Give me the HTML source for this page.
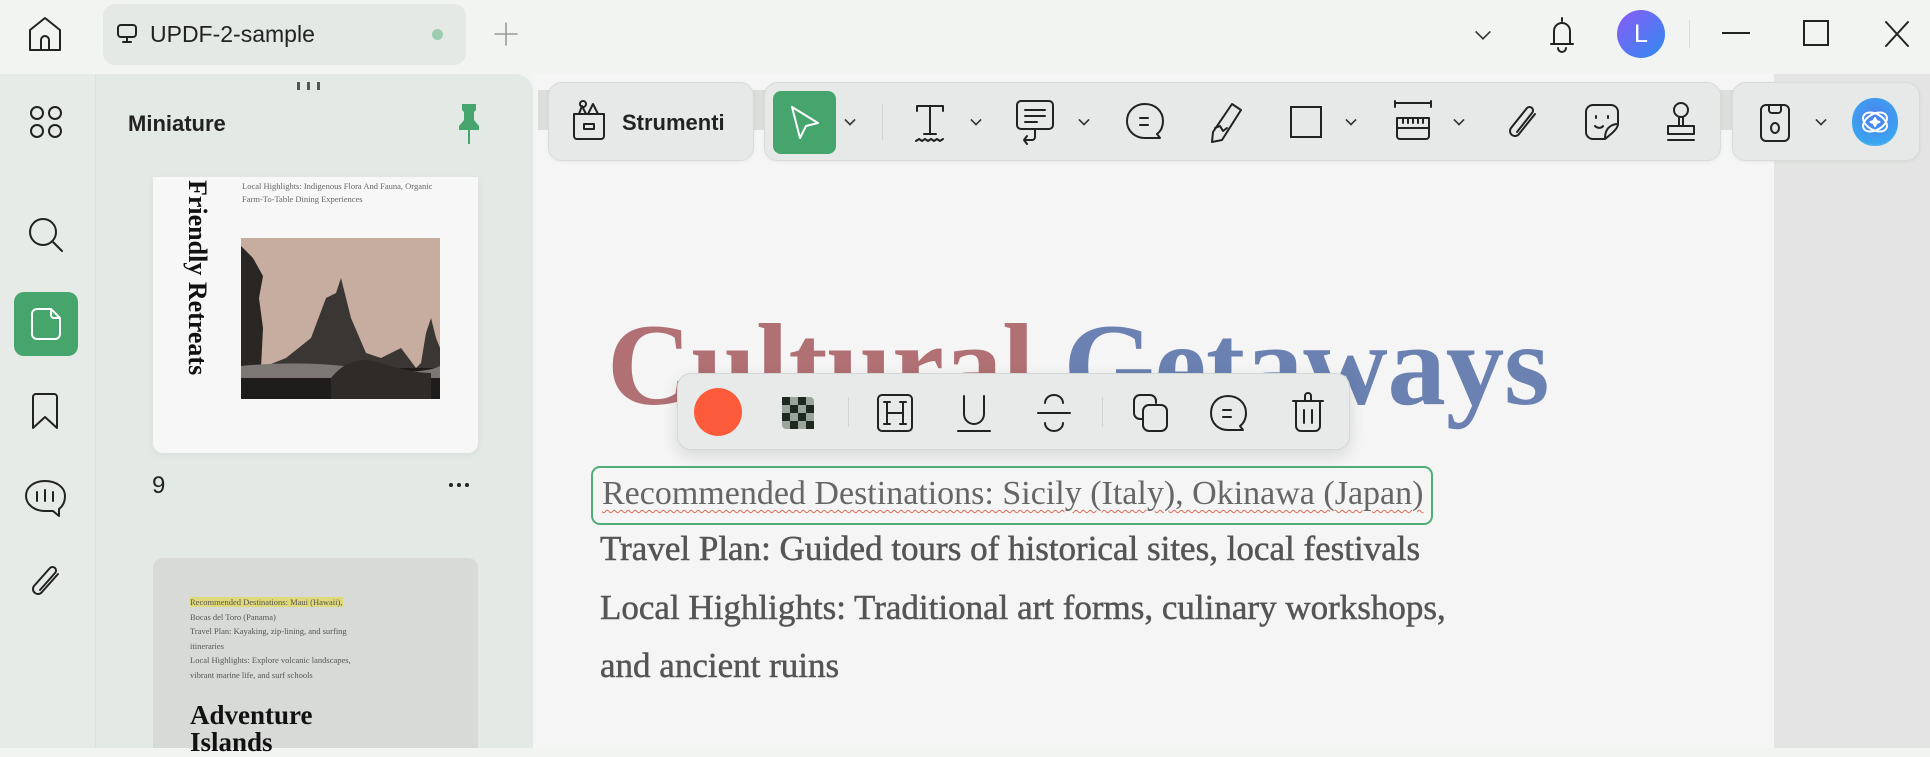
<!DOCTYPE html>
<html><head><meta charset="utf-8"><style>
*{margin:0;padding:0;box-sizing:border-box}
body{width:1930px;height:748px;overflow:hidden;background:#f2f4f2;font-family:"Liberation Sans",sans-serif;position:relative;color:#222}
.a{position:absolute}
svg.i{position:absolute;fill:none;stroke:#222;stroke-width:2;stroke-linecap:round;stroke-linejoin:round}
.tb{position:absolute;top:82px;height:79px;background:#e6e9e7;border:1px solid #d8dcd9;border-radius:14px;box-shadow:0 1px 3px rgba(0,0,0,.06)}
.chev{position:absolute;width:10px;height:10px;border-right:2px solid #333;border-bottom:2px solid #333;transform:rotate(45deg) scale(.8)}
.serif{font-family:"Liberation Serif",serif}
</style></head><body>

<!-- top bar -->
<svg class="i" style="left:26px;top:14px" width="38" height="40" viewBox="0 0 38 40"><path d="M4 36V16L19 4L34 16V36H4Z M15 36V26a4 4 0 0 1 8 0V36"/></svg>
<div class="a" style="left:103px;top:4px;width:363px;height:61px;background:#e5e9e6;border-radius:12px"></div>
<svg class="i" style="left:116px;top:23px" width="22" height="22" viewBox="0 0 22 22" stroke-width="1.6"><rect x="2" y="2" width="18" height="12" rx="3"/><path d="M11 14v5M7 19h8"/></svg>
<div class="a" style="left:150px;top:21px;font-size:23px;color:#222">UPDF-2-sample</div>
<div class="a" style="left:432px;top:29px;width:11px;height:11px;border-radius:50%;background:#9ccdb0"></div>
<svg class="i" style="left:494px;top:22px;stroke:#999;stroke-width:1.6" width="24" height="24" viewBox="0 0 24 24"><path d="M12 1v22M1 12h22"/></svg>

<div class="chev" style="left:1476px;top:25px;width:14px;height:14px"></div>
<svg class="i" style="left:1546px;top:14px" width="32" height="40" viewBox="0 0 32 40" stroke-width="1.8"><path d="M16 4v3M8 30V17a8 8 0 0 1 16 0V30H8ZM5 30h22M12 34a4 4 0 0 0 8 0"/></svg>
<div class="a" style="left:1617px;top:10px;width:48px;height:48px;border-radius:50%;background:linear-gradient(135deg,#8a5cf6,#2f8af0);color:#fff;font-size:25px;text-align:center;line-height:48px">L</div>
<div class="a" style="left:1689px;top:20px;width:1px;height:28px;background:#ddd"></div>
<div class="a" style="left:1722px;top:32px;width:28px;height:2px;background:#222"></div>
<div class="a" style="left:1803px;top:20px;width:26px;height:26px;border:2px solid #222"></div>
<svg class="i" style="left:1884px;top:20px" width="26" height="28" viewBox="0 0 26 28" stroke-width="1.8"><path d="M2 2L24 26M24 2L2 26"/></svg>

<!-- left panel -->
<div class="a" style="left:0;top:74px;width:533px;height:674px;background:#e3e9e5;border-top-right-radius:18px"></div>
<div class="a" style="left:0;top:74px;width:96px;height:674px;background:#e6ebe8;border-right:1px solid #dbe1dd"></div>
<svg class="i" style="left:28px;top:104px" width="36" height="36" viewBox="0 0 36 36" stroke-width="1.8"><circle cx="9" cy="9" r="6"/><circle cx="27" cy="9" r="6"/><circle cx="9" cy="27" r="6"/><circle cx="27" cy="27" r="6"/></svg>
<svg class="i" style="left:25px;top:214px" width="42" height="42" viewBox="0 0 42 42"><circle cx="18" cy="18" r="13"/><path d="M28 28l9 9"/></svg>
<div class="a" style="left:14px;top:292px;width:64px;height:64px;background:#46a56d;border-radius:10px"></div>
<svg class="i" style="left:29px;top:306px;stroke:#fff" width="34" height="36" viewBox="0 0 34 36"><path d="M8 3h14l9 9v16a5 5 0 0 1-5 5H8a5 5 0 0 1-5-5V8a5 5 0 0 1 5-5Z M22 3v6a3 3 0 0 0 3 3h6"/></svg>
<svg class="i" style="left:30px;top:391px" width="30" height="40" viewBox="0 0 30 40"><path d="M3 37V6a3 3 0 0 1 3-3h18a3 3 0 0 1 3 3v31L15 26Z"/></svg>
<svg class="i" style="left:24px;top:478px" width="42" height="40" viewBox="0 0 42 40"><path d="M21 3C10 3 2 9 2 18c0 8 8 15 19 15h8l6 5v-7c4-3 6-8 6-13C41 9 32 3 21 3Z M13 14v9M21 12v11M29 14v9"/></svg>
<svg class="i" style="left:28px;top:562px" width="36" height="40" viewBox="0 0 36 40"><path d="M30 12L14 30a5 5 0 0 1-8-6L22 6a3.5 3.5 0 0 1 5 5L12 28"/></svg>

<div class="a" style="left:297px;top:82px;width:3px;height:8px;background:#555;box-shadow:10px 0 #555,20px 0 #555"></div>
<div class="a" style="left:128px;top:111px;font-size:22px;font-weight:bold;color:#222">Miniature</div>
<svg class="a" style="left:456px;top:104px" width="26" height="40" viewBox="0 0 26 40"><path d="M6 0h14v6l-2 2v8l5 6v4H3v-4l5-6V8L6 6Z" fill="#46a56d"/><rect x="12" y="26" width="2" height="14" fill="#46a56d"/></svg>

<!-- thumb 1 -->
<div class="a" style="left:153px;top:177px;width:325px;height:276px;background:#f7f7f7;border-radius:0 0 10px 10px;box-shadow:0 2px 8px rgba(0,0,0,.05)"></div>
<div class="a serif" style="left:172px;top:180px;width:40px;height:220px;font-weight:bold;font-size:26px;color:#111;writing-mode:vertical-rl;white-space:nowrap">Friendly Retreats</div>
<div class="a serif" style="left:242px;top:180px;font-size:8.5px;color:#666;line-height:13px">Local Highlights: Indigenous Flora And Fauna, Organic<br>Farm-To-Table Dining Experiences</div>
<svg class="a" style="left:241px;top:238px" width="199" height="161" viewBox="0 0 199 161"><rect width="199" height="161" fill="#c7ada0"/><path d="M0 8 L12 20 L22 38 L18 60 L22 90 L20 130 L28 161 H0Z" fill="#2a2624"/><path d="M20 130 L45 120 L70 100 L85 60 L95 55 L100 40 L110 80 L125 115 L140 120 L160 110 L175 130 L180 125 L185 95 L190 80 L195 100 L199 110 V161 H0 Z" fill="#3a3634"/><rect y="130" width="199" height="31" fill="#1f1d1c"/><path d="M0 128 Q60 122 120 130 T199 128 V140 H0Z" fill="#7c7775"/><path d="M90 140 Q110 115 140 125 T190 135 V161 H90Z" fill="#2f2b28"/></svg>
<div class="a" style="left:152px;top:472px;font-size:24px;color:#222">9</div>
<div class="a" style="left:449px;top:483px;width:4px;height:4px;border-radius:50%;background:#222;box-shadow:8px 0 #222,16px 0 #222"></div>

<!-- thumb 2 -->
<div class="a" style="left:153px;top:558px;width:325px;height:190px;background:#d8dad8;border-radius:10px 10px 0 0"></div>
<div class="a serif" style="left:190px;top:595px;font-size:8.5px;color:#555;line-height:14.6px"><span style="background:#dfd97a">Recommended Destinations: Maui (Hawaii),</span><br>Bocas del Toro (Panama)<br>Travel Plan: Kayaking, zip-lining, and surfing<br>itineraries<br>Local Highlights: Explore volcanic landscapes,<br>vibrant marine life, and surf schools</div>
<div class="a serif" style="left:190px;top:702px;font-size:27px;font-weight:bold;color:#111;line-height:27px">Adventure<br>Islands</div>

<!-- main -->
<div class="a" style="left:533px;top:74px;width:1241px;height:674px;background:#f4f5f4"></div>
<div class="a" style="left:1774px;top:74px;width:156px;height:674px;background:#e3e4e3"></div>
<div class="a" style="left:538px;top:90px;width:1236px;height:40px;background:#dcdedc"></div>

<div class="tb" style="left:548px;width:206px"></div>
<svg class="i" style="left:570px;top:98px" width="38" height="44" viewBox="0 0 38 44" stroke-width="1.8"><path d="M4 16h30v22a3 3 0 0 1-3 3H7a3 3 0 0 1-3-3Z M14 26h10v5H14Z M9 16l3-8 4 8 M18 16l5-10 5 10"/><circle cx="13" cy="6" r="3"/></svg>
<div class="a" style="left:622px;top:110px;font-size:22px;font-weight:bold">Strumenti</div>

<div class="tb" style="left:764px;width:957px"></div>
<div class="a" style="left:773px;top:91px;width:63px;height:63px;background:#46a56d;border-radius:8px"></div>
<svg class="i" style="left:788px;top:104px;stroke:#fff" width="34" height="38" viewBox="0 0 34 38" stroke-width="1.8"><path d="M4 3L30 19L18 22L12 34Z"/></svg>
<div class="chev" style="left:845px;top:115px"></div>
<div class="a" style="left:882px;top:104px;width:1px;height:36px;background:#d0d4d1"></div>
<svg class="i" style="left:913px;top:103px" width="34" height="40" viewBox="0 0 34 40" stroke-width="1.8"><path d="M4 8V3h26v5M17 3v28M11 31h12M3 38l3-2 3 2 3-2 3 2 3-2 3 2 3-2 3 2 3-2"/></svg>
<div class="chev" style="left:971px;top:115px"></div>
<svg class="i" style="left:1014px;top:98px" width="42" height="50" viewBox="0 0 42 50" stroke-width="1.8"><rect x="3" y="3" width="36" height="28" rx="4"/><path d="M11 12h20M11 18h20M11 24h12M21 31v8a3 3 0 0 1-3 3H10M13 38l-3 4 3 4"/></svg>
<div class="chev" style="left:1079px;top:115px"></div>
<svg class="i" style="left:1124px;top:101px" width="42" height="42" viewBox="0 0 42 42" stroke-width="1.8"><path d="M21 3C11 3 3 10 3 20s8 17 18 17h15l-3-4c4-3 6-8 6-13C39 10 31 3 21 3Z M16 17h8M16 24h8"/></svg>
<svg class="i" style="left:1208px;top:100px" width="36" height="44" viewBox="0 0 36 44" stroke-width="1.8"><path d="M24 4l9 6L14 40l-10 2 1-10Z M7 28l5-2 3 5 4-3"/></svg>
<div class="a" style="left:1290px;top:106px;width:32px;height:32px;border:2px solid #222"></div>
<div class="chev" style="left:1346px;top:115px"></div>
<svg class="i" style="left:1393px;top:100px" width="40" height="42" viewBox="0 0 40 42" stroke-width="1.8"><path d="M2 3h36M2 1v6M38 1v6M4 18h32v18a3 3 0 0 1-3 3H7a3 3 0 0 1-3-3Z M4 28h32M10 18v5M15 18v5M20 18v5M25 18v5M30 18v5"/></svg>
<div class="chev" style="left:1454px;top:115px"></div>
<svg class="i" style="left:1505px;top:102px" width="36" height="40" viewBox="0 0 36 40" stroke-width="1.8"><path d="M30 12L14 32a5 5 0 0 1-8-6L22 6a3.5 3.5 0 0 1 5 5L12 30"/></svg>
<svg class="i" style="left:1583px;top:102px" width="38" height="40" viewBox="0 0 38 40" stroke-width="1.8"><path d="M10 3h18a7 7 0 0 1 7 7v12c-4 0-13 2-13 14v1H10a7 7 0 0 1-7-7V10a7 7 0 0 1 7-7Z M22 37c5-4 13-10 13-15 M13 14v2M25 14v2M12 24c3 3 7 2 8 0"/></svg>
<svg class="i" style="left:1663px;top:100px" width="36" height="44" viewBox="0 0 36 44" stroke-width="1.8"><circle cx="18" cy="10" r="7"/><path d="M16 17v9h4v-9M5 26h26v8H5Z M5 40h26"/></svg>

<div class="tb" style="left:1732px;width:188px"></div>
<svg class="i" style="left:1758px;top:102px" width="34" height="42" viewBox="0 0 34 42" stroke-width="1.8"><rect x="3" y="3" width="28" height="36" rx="5"/><path d="M11 3v5a3 3 0 0 0 3 3h6a3 3 0 0 0 3-3V3"/><ellipse cx="17" cy="26" rx="4" ry="5"/></svg>
<div class="chev" style="left:1816px;top:115px"></div>
<div class="a" style="left:1852px;top:98px;width:46px;height:48px;border-radius:48%;background:radial-gradient(circle at 50% 40%,#4f7ff0,#3aa4f0 70%,#7fd8f4)"></div>
<svg class="i" style="left:1858px;top:106px;stroke:#fff" width="34" height="32" viewBox="0 0 34 32" stroke-width="2"><ellipse cx="17" cy="16" rx="13" ry="8" transform="rotate(-30 17 16)"/><ellipse cx="17" cy="16" rx="13" ry="8" transform="rotate(30 17 16)"/><path d="M17 12l1.5 3 3 1-3 1-1.5 3-1.5-3-3-1 3-1Z" fill="#fff"/></svg>

<!-- page content -->
<div class="a serif" style="left:607px;top:296px;font-size:117px;font-weight:bold;white-space:nowrap;letter-spacing:-0.2px;line-height:140px"><span style="color:#b07074">Cultural</span> <span style="color:#6a81b2">Getaways</span></div>

<div class="a serif" style="left:591px;top:466px;width:842px;height:59px;border:2px solid #4fae75;border-radius:9px"></div>
<div class="a serif" style="left:602px;top:475px;font-size:34px;color:#666;white-space:nowrap;text-decoration:underline wavy #e06a55;text-decoration-thickness:1px;text-underline-offset:5px">Recommended Destinations: Sicily (Italy), Okinawa (Japan)</div>
<div class="a serif" style="left:600px;top:520px;font-size:35px;color:#555;white-space:nowrap;line-height:58.5px;-webkit-text-stroke:0.5px #555">Travel Plan: Guided tours of historical sites, local festivals<br>Local Highlights: Traditional art forms, culinary workshops,<br>and ancient ruins</div>

<!-- floating toolbar -->
<div class="a" style="left:677px;top:373px;width:673px;height:77px;background:#e7eae8;border:1px solid #d3d8d4;border-radius:14px;box-shadow:0 6px 16px rgba(0,0,0,.12)"></div>
<div class="a" style="left:694px;top:388px;width:48px;height:48px;border-radius:50%;background:#fb5b3a"></div>
<svg class="a" style="left:782px;top:397px" width="32" height="32" viewBox="0 0 4 4"><rect width="4" height="4" rx=".5" fill="#9aa59c"/><rect x="0" y="0" width="1" height="1" fill="#1e2a20"/><rect x="2" y="0" width="1" height="1" fill="#1e2a20"/><rect x="1" y="1" width="1" height="1" fill="#1e2a20"/><rect x="3" y="1" width="1" height="1" fill="#1e2a20"/><rect x="0" y="2" width="1" height="1" fill="#1e2a20"/><rect x="2" y="2" width="1" height="1" fill="#1e2a20"/><rect x="1" y="3" width="1" height="1" fill="#1e2a20"/><rect x="3" y="3" width="1" height="1" fill="#1e2a20"/></svg>
<div class="a" style="left:848px;top:397px;width:1px;height:30px;background:#d0d4d1"></div>
<svg class="i" style="left:876px;top:393px" width="38" height="40" viewBox="0 0 38 40" stroke-width="1.8"><rect x="2" y="2" width="34" height="36" rx="4"/><path d="M11 9v22M27 9v22M11 20h16M8 9h6M24 9h6M8 31h6M24 31h6"/></svg>
<svg class="i" style="left:956px;top:393px" width="36" height="40" viewBox="0 0 36 40" stroke-width="1.8"><path d="M8 3v18a10 10 0 0 0 20 0V3M2 38h32"/></svg>
<svg class="i" style="left:1036px;top:393px" width="36" height="40" viewBox="0 0 36 40" stroke-width="1.8"><path d="M27 10a9 8 0 0 0-18 0M9 30a9 8 0 0 0 18 0M2 20h32"/></svg>
<div class="a" style="left:1102px;top:397px;width:1px;height:30px;background:#d0d4d1"></div>
<svg class="i" style="left:1132px;top:393px" width="38" height="40" viewBox="0 0 38 40" stroke-width="1.8"><path d="M24 10V8a6 6 0 0 0-6-6H8a6 6 0 0 0-6 6v12a6 6 0 0 0 6 6h2"/><rect x="11" y="12" width="24" height="26" rx="6"/></svg>
<svg class="i" style="left:1208px;top:393px" width="40" height="40" viewBox="0 0 40 40" stroke-width="1.8"><path d="M20 3C10 3 3 10 3 20s7 17 17 17h15l-3-4c4-3 6-8 6-13C38 10 30 3 20 3Z M15 17h8M15 24h8"/></svg>
<svg class="i" style="left:1290px;top:390px" width="36" height="44" viewBox="0 0 36 44" stroke-width="1.8"><path d="M3 11h30M15 11V6a3 3 0 0 1 6 0v5M6 11v25a5 5 0 0 0 5 5h14a5 5 0 0 0 5-5V11M14 20v13M22 20v13"/></svg>
</body></html>
